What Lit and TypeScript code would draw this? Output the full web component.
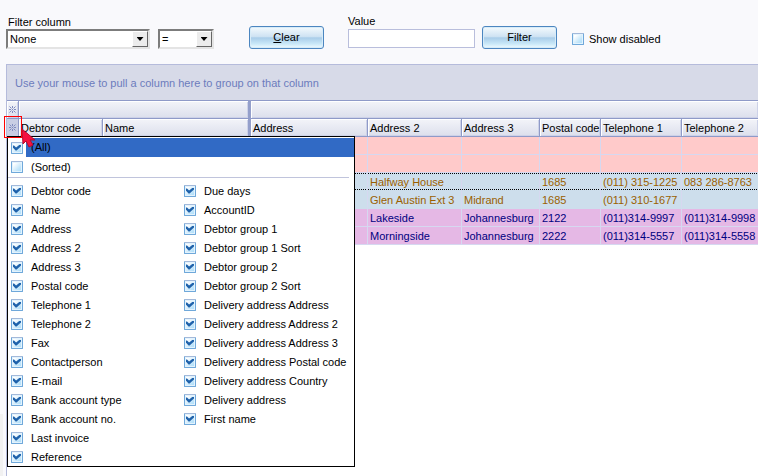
import { LitElement, html, css, svg } from "lit";
import { customElement, property } from "lit/decorators.js";

const LEFT = ["Debtor code", "Name", "Address", "Address 2", "Address 3", "Postal code", "Telephone 1", "Telephone 2", "Fax", "Contactperson", "E-mail", "Bank account type", "Bank account no.", "Last invoice", "Reference"];
const RIGHT = ["Due days", "AccountID", "Debtor group 1", "Debtor group 1 Sort", "Debtor group 2", "Debtor group 2 Sort", "Delivery address Address", "Delivery address Address 2", "Delivery address Address 3", "Delivery address Postal code", "Delivery address Country", "Delivery address", "First name"];
const HEADS = ["Debtor code", "Name", "Address", "Address 2", "Address 3", "Postal code", "Telephone 1", "Telephone 2"];
const ROWS: { kind: string; cells: string[] }[] = [
  { kind: "pink", cells: ["", "", "", "", ""] },
  { kind: "pink", cells: ["", "", "", "", ""] },
  { kind: "blue focus", cells: ["Halfway House", "", "1685", "(011) 315-1225", "083 286-8763"] },
  { kind: "blue", cells: ["Glen Austin Ext 3", "Midrand", "1685", "(011) 310-1677", ""] },
  { kind: "plum", cells: ["Lakeside", "Johannesburg", "2122", "(011)314-9997", "(011)314-9998"] },
  { kind: "plum", cells: ["Morningside", "Johannesburg", "2222", "(011)314-5557", "(011)314-5558"] },
];

const shared = css`
  * { box-sizing: border-box; }
  input, button, select { font: inherit; color: inherit; margin: 0; border-radius: 0; }
  .check {
    appearance: none;
    display: grid;
    place-items: center;
    flex: none;
    width: 12px;
    height: 12px;
    border: 1px solid #6fa8da;
    border-top-color: #a3b9da;
    border-radius: 1px;
    background: linear-gradient(135deg, #ffffff 20%, #c4e6fa 65%, #a5dcfb);
    box-shadow: inset 0 0 0 1px #e3f3fd;
  }
  .check:checked::before {
    content: "";
    width: 8px;
    height: 6px;
    background: #1f62ab;
    clip-path: polygon(0 17%, 13% 17%, 38% 50%, 87% 0, 100% 0, 100% 33%, 45% 100%, 32% 100%, 0 55%);
  }
`;

@customElement("column-chooser")
class ColumnChooser extends LitElement {
  static styles = [shared, css`
    :host { display: block; background: #fff; border: 1px solid #000; padding: 1px 0 0; white-space: nowrap; }
    .row { display: flex; align-items: center; gap: 8px; height: 19px; padding-left: 3px; }
    .all { gap: 3px; }
    .all .label { flex: 1; height: 19px; line-height: 19px; padding-left: 5px; background: #316ac5; color: #000; }
    .top { border-bottom: 1px solid #c0c4dc; margin-right: 5px; padding-bottom: 1px; }
    .lists { display: grid; grid-template-columns: 173px 1fr; padding-top: 3px; }
    ul { list-style: none; margin: 0; padding: 0; }
  `];
  item(name: string) {
    return html`<li><label class="row"><input class="check" type="checkbox" checked><span>${name}</span></label></li>`;
  }
  render() {
    return html`
      <label class="row all"><input class="check" type="checkbox" checked><span class="label">(All)</span></label>
      <div class="top"><label class="row"><input class="check" type="checkbox"><span>(Sorted)</span></label></div>
      <div class="lists">
        <ul>${LEFT.map((n) => this.item(n))}</ul>
        <ul>${RIGHT.map((n) => this.item(n))}</ul>
      </div>`;
  }
}

@customElement("filter-select")
class FilterSelect extends LitElement {
  @property() value = "";
  @property() label = "";
  static styles = [shared, css`
    :host { display: block; position: relative; height: 20px; }
    select {
      appearance: none;
      display: block;
      width: 100%;
      height: 20px;
      padding: 0 18px 0 2px;
      border: 2px solid;
      border-color: #7c7c7c #e4e4e4 #e4e4e4 #7c7c7c;
      background: #fff;
      outline: none;
    }
    .arrow {
      position: absolute;
      top: 2px;
      right: 2px;
      width: 16px;
      height: 16px;
      display: grid;
      place-items: center;
      background: #ececec;
      border: 1px solid;
      border-color: #fff #666 #666 #fff;
      pointer-events: none;
    }
    .arrow::before { content: ""; width: 7px; height: 4px; background: #000; clip-path: polygon(0 0, 100% 0, 50% 100%); }
  `];
  render() {
    return html`<select aria-label=${this.label}><option>${this.value}</option></select><span class="arrow"></span>`;
  }
}

@customElement("app-root")
class AppRoot extends LitElement {
  static styles = [shared, css`
    :host {
      display: flex;
      flex-direction: column;
      min-height: 100vh;
      box-sizing: border-box;
      padding: 14px 0 0 6px;
      overflow: hidden;
      background: linear-gradient(#f1f1f1, #f1f1f1) left bottom / 3px 62px no-repeat #f9f9fc;
      font: 11px/14px "Liberation Sans", Arial, sans-serif;
      color: #000;
    }
    .filters { display: flex; align-items: flex-end; height: 36px; padding-bottom: 1px; }
    .field { display: flex; flex-direction: column; }
    .field .name { padding-left: 2px; }
    .column { width: 144px; margin-right: 8px; }
    .operator { width: 56px; margin-right: 35px; }
    .value { width: 127px; margin: 0 7px 0 24px; }
    .value .name { padding-left: 0; margin-bottom: 1px; }
    .text { height: 19px; border: 1px solid #b9bedc; background: #fff; padding: 0 3px; width: 100%; margin-bottom: 1px; }
    .push {
      width: 75px;
      height: 23px;
      padding: 0 0 1px;
      border: 1px solid #4c86c0;
      border-radius: 3px;
      background: linear-gradient(#f4fafd 0, #cfe3f3 45%, #a9cde9 52%, #c9e8f8 80%, #f0fcff);
      box-shadow: inset 0 0 0 1px #d8ecf8;
    }
    .disabled { display: flex; align-items: center; gap: 5px; height: 20px; margin-left: 15px; }
    .grid {
      position: relative;
      flex: 1;
      margin-top: 14px;
      border: solid #b5bbdb;
      border-width: 1px 0 0 1px;
      background: #fff;
    }
    .group { height: 35px; padding: 11px 8px 0; background: #d7dae8; color: #6c7cbd; }
    table { width: 100%; table-layout: fixed; border-spacing: 0; }
    th, td { padding: 0 2px; text-align: left; font-weight: 400; white-space: nowrap; overflow: hidden; }
    th {
      height: 18px;
      border-top: 1px solid #8f9ac8;
      border-right: 1px solid #8f9ac8;
      background: linear-gradient(#f3f4f9, #dcdfec);
      box-shadow: inset 1px 1px #fff, inset -1px -1px #cdd2e8;
    }
    .heads th { height: 19px; border-bottom: 1px solid #8f9ac8; }
    th.split { border-right: 3px solid #949fcb; }
    th.mark { padding: 0; text-align: center; line-height: 0; }
    .mark svg { display: block; margin: auto; }
    .heads th.pressed { background: #c9cee4; box-shadow: none; }
    td { height: 18px; border-right: 1px solid #d6d8f0; border-bottom: 1px solid #d6d8f0; }
    th:last-child, td:last-child { border-right: 0; }
    .pink td { background: #ffcaca; }
    .blue td { background: #cddeec; color: #9a6000; border-bottom-color: #cddeec; }
    .plum td { background: #e5b8e5; color: #000080; }
    .focus td {
      background: repeating-linear-gradient(90deg, #000 0 1px, transparent 1px 2px) 0 0 / 100% 1px no-repeat,
        repeating-linear-gradient(90deg, #000 0 1px, transparent 1px 2px) 0 16px / 100% 1px no-repeat, #cddeec;
    }
    .chooser { position: absolute; left: 0; top: 71px; width: 348px; }
    .ring { position: absolute; left: -3px; top: 51px; width: 18px; height: 22px; border: 1px solid #ff0000; }
    .pointer { position: absolute; left: 14px; top: 63px; }
  `];
  star() {
    return html`<svg width="9" height="9" viewBox="0 0 9 9" fill="none" stroke="#7f8bbf">${svg`<path d="M4.5 1v2M4.5 6v2M1 4.5h2M6 4.5h2M1.500 1.500l2 2M5.500 5.500l2 2M7.500 1.500l-2 2M3.500 5.500l-2 2M4 4.500h1"/>`}</svg>`;
  }
  render() {
    return html`
      <div class="filters">
        <div class="field column"><span class="name">Filter column</span><filter-select label="Filter column" value="None"></filter-select></div>
        <div class="field operator"><filter-select label="Operator" value="="></filter-select></div>
        <button class="push"><u>C</u>lear</button>
        <label class="field value"><span class="name">Value</span><input class="text" type="text"></label>
        <button class="push">Filter</button>
        <label class="disabled"><input class="check" type="checkbox"><span>Show disabled</span></label>
      </div>
      <div class="grid">
        <div class="group">Use your mouse to pull a column here to group on that column</div>
        <table>
          <colgroup>
            <col style="width:12px"><col style="width:84px"><col style="width:148px"><col style="width:117px"><col style="width:94px"><col style="width:78px"><col style="width:61px"><col style="width:81px"><col>
          </colgroup>
          <thead>
            <tr><th class="mark">${this.star()}</th><th class="split" colspan="2"></th><th colspan="6"></th></tr>
            <tr class="heads"><th class="mark pressed">${this.star()}</th>${HEADS.map((h) => html`<th class=${h === "Name" ? "split" : ""}>${h}</th>`)}</tr>
          </thead>
          <tbody>
            ${ROWS.map((r) => html`<tr class=${r.kind}><td></td><td></td><td></td><td></td>${r.cells.map((c) => html`<td>${c}</td>`)}</tr>`)}
          </tbody>
        </table>
        <column-chooser class="chooser"></column-chooser>
        <span class="ring"></span>
        <svg class="pointer" width="15" height="20" viewBox="0 0 15 20"><path d="M1 1l1 15 3-3 3 6 4-2-3-5h5z" fill="#f5103f" stroke="#b80c30"/></svg>
      </div>`;
  }
}
